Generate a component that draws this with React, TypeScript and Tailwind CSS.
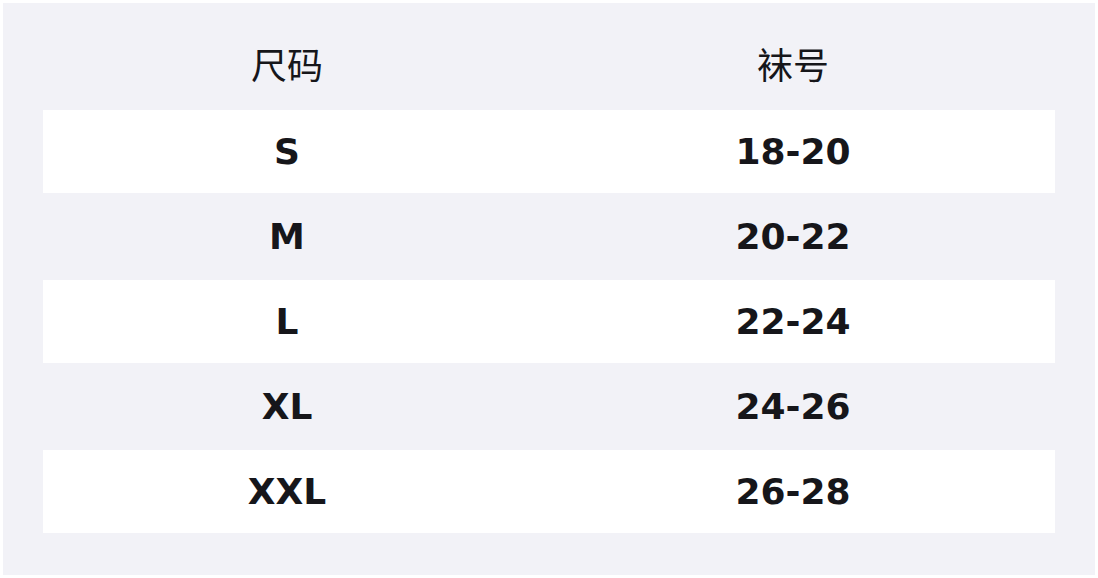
import React from "react";

const rows = [
  { size: "S", sock: "18-20" },
  { size: "M", sock: "20-22" },
  { size: "L", sock: "22-24" },
  { size: "XL", sock: "24-26" },
  { size: "XXL", sock: "26-28" },
];

export default function App() {
  return (
    <div className="w-[1098px] h-[578px] bg-white p-[3px]">
      <div className="h-full bg-[#f2f2f7] px-[40px] pt-[40px] text-[#16161a]">
        {/* header */}
        <div
          className="grid grid-cols-[488px_1fr] h-[66px] pb-[26px] items-center text-center text-[36px] leading-none"
          style={{ fontFamily: '"Noto Sans CJK SC", "Noto Sans", sans-serif' }}
        >
          <div>尺码</div>
          <div>袜号</div>
        </div>

        {/* rows */}
        {rows.map((r, i) => (
          <div
            key={r.size}
            className={`grid grid-cols-[488px_1fr] h-[85px] items-center text-center text-[36px] font-bold leading-none border-y border-[#f2f2f7] ${
              i % 2 === 0 ? "bg-white" : "bg-[#f2f2f7]"
            }`}
            style={{ fontFamily: '"DejaVu Sans", sans-serif' }}
          >
            <div>{r.size}</div>
            <div>{r.sock}</div>
          </div>
        ))}
      </div>
    </div>
  );
}
